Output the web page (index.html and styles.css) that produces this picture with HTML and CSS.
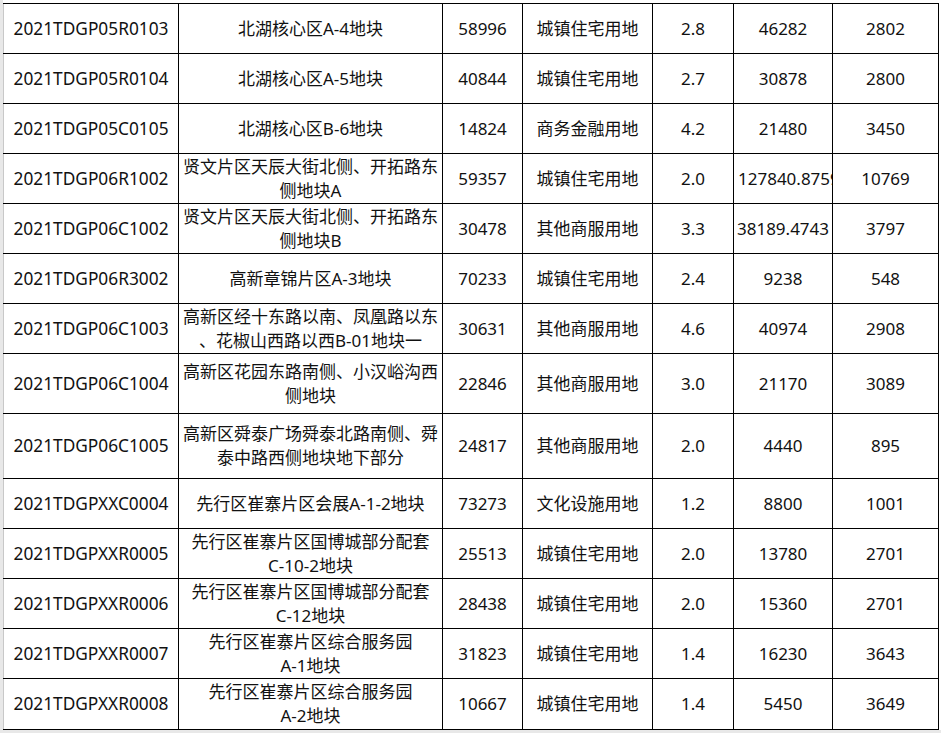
FILE: index.html
```html
<!DOCTYPE html>
<html lang="zh-CN">
<head>
<meta charset="utf-8">
<title>地块表</title>
<link rel="stylesheet" href="styles.css">
</head>
<body>
<div class="sheet">
<table class="grid">
<colgroup>
<col class="c1"><col class="c2"><col class="c3"><col class="c4"><col class="c5"><col class="c6"><col class="c7">
</colgroup>
<tbody>
<tr class="r50"><td>2021TDGP05R0103</td><td>北湖核心区A-4地块</td><td>58996</td><td>城镇住宅用地</td><td>2.8</td><td>46282</td><td>2802</td></tr>
<tr class="r50"><td>2021TDGP05R0104</td><td>北湖核心区A-5地块</td><td>40844</td><td>城镇住宅用地</td><td>2.7</td><td>30878</td><td>2800</td></tr>
<tr class="r50"><td>2021TDGP05C0105</td><td>北湖核心区B-6地块</td><td>14824</td><td>商务金融用地</td><td>4.2</td><td>21480</td><td>3450</td></tr>
<tr class="r50"><td>2021TDGP06R1002</td><td><span class="ln">贤文片区天辰大街北侧、开拓路东</span><span class="ln">侧地块A</span></td><td>59357</td><td>城镇住宅用地</td><td>2.0</td><td class="clip">127840.8759</td><td>10769</td></tr>
<tr class="r50"><td>2021TDGP06C1002</td><td><span class="ln">贤文片区天辰大街北侧、开拓路东</span><span class="ln">侧地块B</span></td><td>30478</td><td>其他商服用地</td><td>3.3</td><td>38189.4743</td><td>3797</td></tr>
<tr class="r50"><td>2021TDGP06R3002</td><td>高新章锦片区A-3地块</td><td>70233</td><td>城镇住宅用地</td><td>2.4</td><td>9238</td><td>548</td></tr>
<tr class="r50"><td>2021TDGP06C1003</td><td><span class="ln">高新区经十东路以南、凤凰路以东</span><span class="ln">、花椒山西路以西B-01地块一</span></td><td>30631</td><td>其他商服用地</td><td>4.6</td><td>40974</td><td>2908</td></tr>
<tr class="r60"><td>2021TDGP06C1004</td><td><span class="ln">高新区花园东路南侧、小汉峪沟西</span><span class="ln">侧地块</span></td><td>22846</td><td>其他商服用地</td><td>3.0</td><td>21170</td><td>3089</td></tr>
<tr class="r64"><td>2021TDGP06C1005</td><td><span class="ln">高新区舜泰广场舜泰北路南侧、舜</span><span class="ln">泰中路西侧地块地下部分</span></td><td>24817</td><td>其他商服用地</td><td>2.0</td><td>4440</td><td>895</td></tr>
<tr class="r50"><td>2021TDGPXXC0004</td><td>先行区崔寨片区会展A-1-2地块</td><td>73273</td><td>文化设施用地</td><td>1.2</td><td>8800</td><td>1001</td></tr>
<tr class="r50"><td>2021TDGPXXR0005</td><td><span class="ln">先行区崔寨片区国博城部分配套</span><span class="ln">C-10-2地块</span></td><td>25513</td><td>城镇住宅用地</td><td>2.0</td><td>13780</td><td>2701</td></tr>
<tr class="r50"><td>2021TDGPXXR0006</td><td><span class="ln">先行区崔寨片区国博城部分配套</span><span class="ln">C-12地块</span></td><td>28438</td><td>城镇住宅用地</td><td>2.0</td><td>15360</td><td>2701</td></tr>
<tr class="r50"><td>2021TDGPXXR0007</td><td><span class="ln">先行区崔寨片区综合服务园</span><span class="ln">A-1地块</span></td><td>31823</td><td>城镇住宅用地</td><td>1.4</td><td>16230</td><td>3643</td></tr>
<tr class="r51"><td>2021TDGPXXR0008</td><td><span class="ln">先行区崔寨片区综合服务园</span><span class="ln">A-2地块</span></td><td>10667</td><td>城镇住宅用地</td><td>1.4</td><td>5450</td><td>3649</td></tr>
</tbody>
</table>
</div>
</body>
</html>
```
FILE: styles.css
```css
html, body {
  margin: 0;
  padding: 0;
}
body {
  background: #e8e8e8;
  width: 941px;
  height: 733px;
  overflow: hidden;
  font-family: "Noto Sans", "Noto Sans CJK SC", sans-serif;
  color: #111;
}
.sheet {
  margin-left: 3px;
  width: 938px;
  background: #fff;
  padding-top: 3px;
}
.grid {
  border-collapse: collapse;
  table-layout: fixed;
  width: 936px;
}
.c1 { width: 175px; }
.c2 { width: 264px; }
.c3 { width: 80px; }
.c4 { width: 130px; }
.c5 { width: 81px; }
.c6 { width: 99px; }
.c7 { width: 106px; }
.grid td {
  border: 1px solid #000;
  border-left-color: #c8c8c8;
  padding: 0 2px;
  font-size: 17px;
  line-height: 24px;
  text-align: center;
  vertical-align: middle;
  white-space: nowrap;
  overflow: hidden;
}
.grid td + td {
  border-left-color: #000;
}
.grid td:first-child {
  font-size: 17.3px;
}
.ln {
  display: block;
  height: 24px;
  line-height: 24px;
  overflow: visible;
}
.grid td.clip {
  text-overflow: clip;
  text-align: left;
  padding-left: 4px;
}
.r50 { height: 50px; }
.r60 { height: 60px; }
.r64 { height: 65px; }
.r51 { height: 51px; }
```
